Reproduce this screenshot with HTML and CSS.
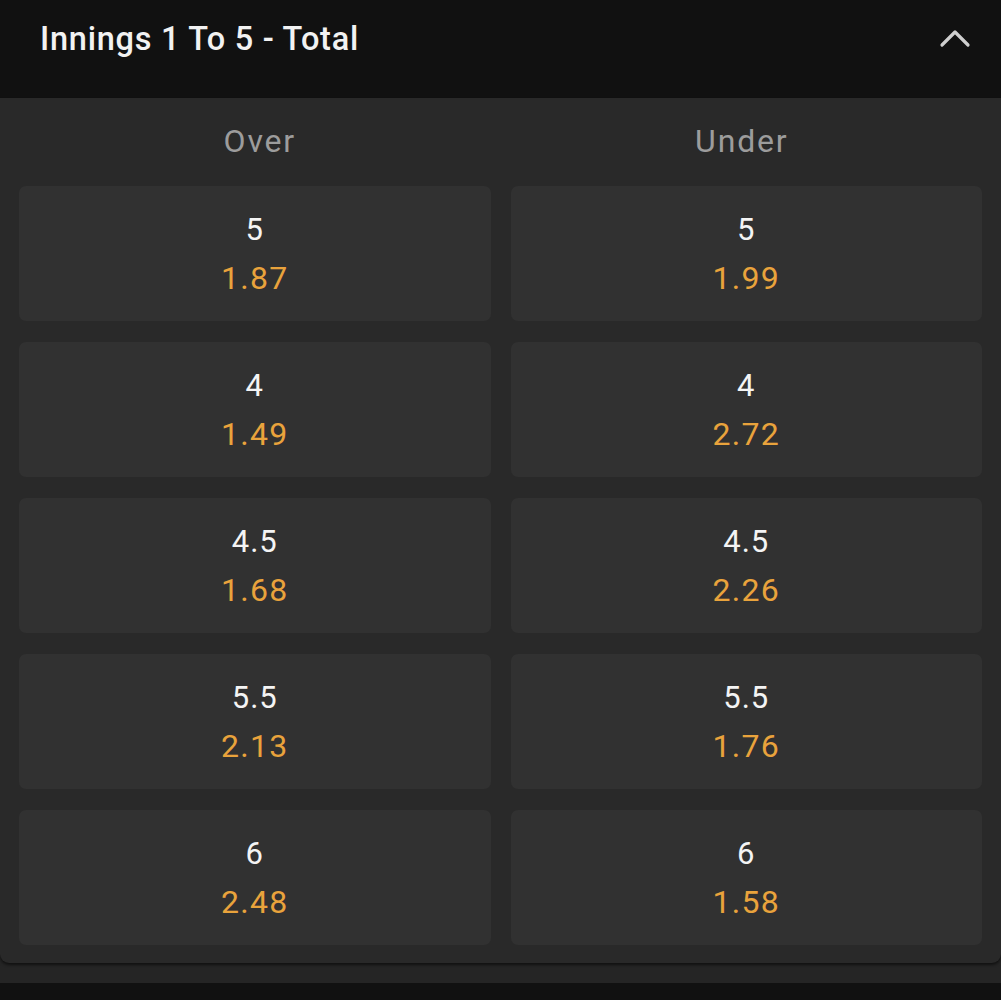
FILE: index.html
```html
<!DOCTYPE html>
<html>
<head>
<meta charset="utf-8">
<link rel="stylesheet" href="styles.css">
</head>
<body>
<div class="market">
  <header class="market-head">
    <h2 class="market-title">Innings 1 To 5 - Total</h2>
    <svg class="chev" width="32" height="20" viewBox="0 0 32 20"><path d="M3 17 L16 4 L29 17" fill="none" stroke="#cfcfcf" stroke-width="3.2" stroke-linecap="round" stroke-linejoin="round"/></svg>
  </header>
  <section class="market-body">
    <div class="labels">
      <div class="label label-over">Over</div>
      <div class="label label-under">Under</div>
    </div>
    <div class="grid">
      <button class="odd"><span class="line">5</span><span class="price">1.87</span></button>
      <button class="odd"><span class="line">5</span><span class="price">1.99</span></button>
      <button class="odd"><span class="line">4</span><span class="price">1.49</span></button>
      <button class="odd"><span class="line">4</span><span class="price">2.72</span></button>
      <button class="odd"><span class="line">4.5</span><span class="price">1.68</span></button>
      <button class="odd"><span class="line">4.5</span><span class="price">2.26</span></button>
      <button class="odd"><span class="line">5.5</span><span class="price">2.13</span></button>
      <button class="odd"><span class="line">5.5</span><span class="price">1.76</span></button>
      <button class="odd"><span class="line">6</span><span class="price">2.48</span></button>
      <button class="odd"><span class="line">6</span><span class="price">1.58</span></button>
    </div>
  </section>
</div>
<div class="next-bar"></div>
</body>
</html>
```

FILE: styles.css
```css
html, body {
  margin: 0;
  padding: 0;
  background: #252525;
  font-family: Roboto, "Liberation Sans", sans-serif;
}
.market-head {
  height: 98px;
  background: #111111;
  display: flex;
  align-items: center;
  justify-content: space-between;
  padding: 0 30px 20px 40px;
  box-sizing: border-box;
}
.market-title {
  margin: 0;
  color: #f2f2f2;
  font-size: 32.5px;
  font-weight: 500;
  letter-spacing: 0.75px;
}
.chev {
  display: block;
  margin-top: -2px;
}
.market-body {
  background: #292929;
  border-radius: 0 0 9px 9px;
  box-shadow: 0 2px 3px rgba(0, 0, 0, 0.55);
  padding: 0 19px 18px;
  margin-bottom: 20px;
}
.labels {
  height: 88px;
  display: grid;
  grid-template-columns: 1fr 1fr;
  column-gap: 20px;
  align-items: center;
}
.label {
  text-align: center;
  color: #9c9c9c;
  font-size: 32px;
  letter-spacing: 1.8px;
  padding-bottom: 2px;
}
.label-over { padding-left: 10px; }
.label-under { padding-right: 9px; }
.grid {
  display: grid;
  grid-template-columns: 1fr 1fr;
  column-gap: 20px;
  row-gap: 21px;
}
.odd {
  height: 135px;
  border: none;
  border-radius: 7px;
  background: #313131;
  display: flex;
  flex-direction: column;
  align-items: center;
  justify-content: center;
  font-family: inherit;
  padding: 0;
}
.line {
  color: #f4f4f4;
  font-size: 31px;
  letter-spacing: 1px;
  line-height: 48px;
}
.price {
  color: #e9a33c;
  font-size: 32px;
  letter-spacing: 1.3px;
  line-height: 48px;
}
.next-bar {
  height: 40px;
  background: #111111;
}
```
